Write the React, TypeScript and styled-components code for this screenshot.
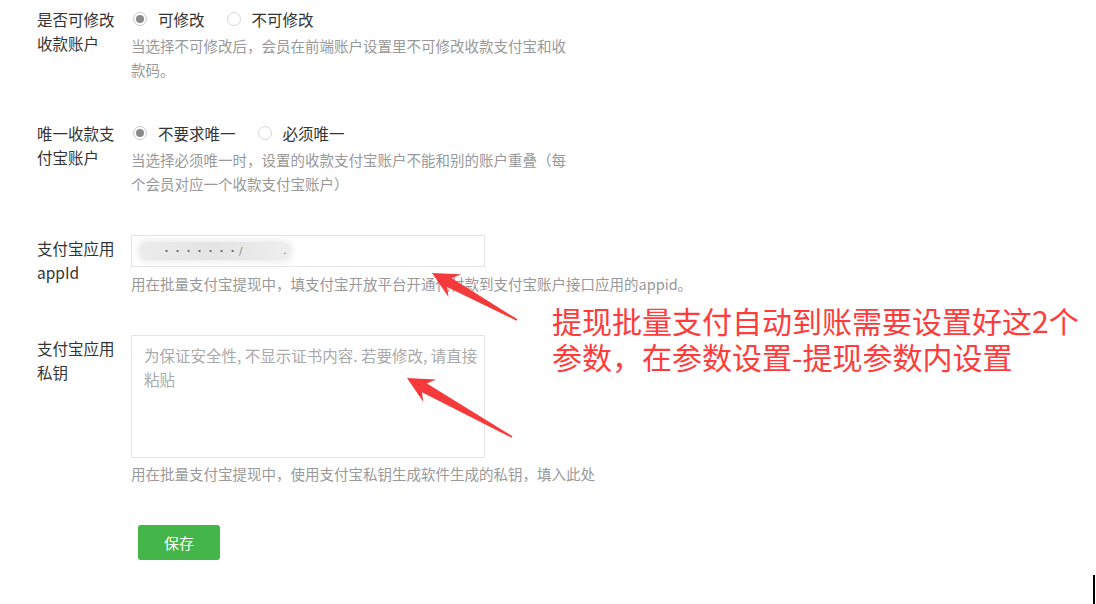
import React from "react";
import styled, { createGlobalStyle } from "styled-components";

const GlobalStyle = createGlobalStyle`
  body {
    margin: 0;
    background: #fff;
    font-family: "Noto Sans CJK SC", "Noto Sans", sans-serif;
  }
`;

type Pt = [number, number];

// red screenshot-style arrow, tip first, tail second
function arrowPoints(tip: Pt, tail: Pt) {
  const [tx, ty] = tip;
  const dx = tail[0] - tx;
  const dy = tail[1] - ty;
  const len = Math.hypot(dx, dy);
  const ux = dx / len;
  const uy = dy / len;
  const nx = -uy;
  const ny = ux;
  const at = (along: number, side: number): string =>
    `${(tx + ux * along + nx * side).toFixed(1)},${(ty + uy * along + ny * side).toFixed(1)}`;
  return [
    at(0, 0),
    at(26, 13),
    at(20, 5),
    at(len, 0.8),
    at(len, -0.8),
    at(20, -5),
    at(26, -13),
  ].join(" ");
}

export default function App() {
  return (
    <>
      <GlobalStyle />
      <Page>
        <Form>
          <Row>
            <Label>是否可修改收款账户</Label>
            <Control>
              <RadioGroup>
                <Option>
                  <Dot $checked />
                  可修改
                </Option>
                <Option>
                  <Dot $checked={false} />
                  不可修改
                </Option>
              </RadioGroup>
              <Help $gap={3} $narrow>
                当选择不可修改后，会员在前端账户设置里不可修改收款支付宝和收款码。
              </Help>
            </Control>
          </Row>

          <Row>
            <Label>唯一收款支付宝账户</Label>
            <Control>
              <RadioGroup>
                <Option>
                  <Dot $checked />
                  不要求唯一
                </Option>
                <Option>
                  <Dot $checked={false} />
                  必须唯一
                </Option>
              </RadioGroup>
              <Help $gap={3} $narrow>
                当选择必须唯一时，设置的收款支付宝账户不能和别的账户重叠（每个会员对应一个收款支付宝账户）
              </Help>
            </Control>
          </Row>

          <Row>
            <Label $offset={1}>支付宝应用appId</Label>
            <Control>
              <Field>
                <Smudge>
                  <Dots>·······/</Dots>
                  <Dots>.</Dots>
                </Smudge>
              </Field>
              <Help $gap={5}>
                用在批量支付宝提现中，填支付宝开放平台开通代付款到支付宝账户接口应用的appid。
              </Help>
            </Control>
          </Row>

          <Row>
            <Label $offset={1}>支付宝应用私钥</Label>
            <Control>
              <KeyArea
                readOnly
                placeholder="为保证安全性, 不显示证书内容. 若要修改, 请直接粘贴"
              />
              <Help $gap={4}>
                用在批量支付宝提现中，使用支付宝私钥生成软件生成的私钥，填入此处
              </Help>
            </Control>
          </Row>

          <ButtonRow>
            <SaveButton>保存</SaveButton>
          </ButtonRow>
        </Form>

        <Arrows viewBox="0 0 1096 604">
          <polygon points={arrowPoints([432, 273], [517, 320])} />
          <polygon points={arrowPoints([407, 378], [512, 437])} />
        </Arrows>

        <Note>
          {"提现批量支付自动到账需要设置好这2个\n参数，在参数设置-提现参数内设置"}
        </Note>

        <Caret />
      </Page>
    </>
  );
}

const Page = styled.div`
  position: relative;
  width: 1096px;
  height: 604px;
  overflow: hidden;
  box-sizing: border-box;
  padding: 7px 0 0 37px;
`;

const Form = styled.div`
  display: flex;
  flex-direction: column;
  gap: 39px;
`;

const Row = styled.div`
  display: flex;
  align-items: flex-start;
`;

const Label = styled.div<{ $offset?: number }>`
  width: 84px;
  margin-right: 10px;
  padding-top: ${p => p.$offset ?? 0}px;
  font-size: 15.5px;
  line-height: 24px;
  color: #333;
`;

const Control = styled.div`
  display: flex;
  flex-direction: column;
`;

const RadioGroup = styled.div`
  display: flex;
  align-items: center;
  gap: 22px;
  height: 24px;
  padding-left: 2px;
`;

const Option = styled.label`
  display: flex;
  align-items: center;
  gap: 11px;
  font-size: 15.5px;
  color: #333;
`;

const Dot = styled.span<{ $checked: boolean }>`
  display: flex;
  align-items: center;
  justify-content: center;
  width: 14px;
  height: 14px;
  box-sizing: border-box;
  border-radius: 50%;
  border: 1px solid ${p => (p.$checked ? "#c8c8c8" : "#d6d6d6")};

  &::after {
    content: "";
    display: ${p => (p.$checked ? "block" : "none")};
    width: 8px;
    height: 8px;
    border-radius: 50%;
    background: #8a8a8a;
  }
`;

const Help = styled.div<{ $gap: number; $narrow?: boolean }>`
  margin-top: ${p => p.$gap}px;
  font-size: 14.5px;
  line-height: 24px;
  color: #999;
  ${p => p.$narrow && "max-width: 445px;"}
`;

const Field = styled.div`
  display: flex;
  align-items: center;
  width: 354px;
  height: 32px;
  box-sizing: border-box;
  padding-left: 8px;
  border: 1px solid #e4e4e4;
`;

const Smudge = styled.span`
  display: flex;
  align-items: center;
  justify-content: space-between;
  width: 150px;
  height: 18px;
  box-sizing: border-box;
  padding: 0 2px 0 22px;
  border-radius: 6px;
  background: linear-gradient(90deg, #ececec, #e4e4e4 50%, #eeeeee);
  box-shadow: 0 0 5px 3px #f0f0f0;
`;

const Dots = styled.span`
  font-size: 9px;
  line-height: 12px;
  letter-spacing: 2px;
  color: #555;
  white-space: nowrap;
`;

const KeyArea = styled.textarea`
  width: 354px;
  height: 123px;
  box-sizing: border-box;
  margin: 0;
  padding: 7px 3px 7px 12px;
  border: 1px solid #e4e4e4;
  border-radius: 0;
  resize: none;
  outline: none;
  font-family: inherit;
  font-size: 15.5px;
  line-height: 24px;
  color: #333;

  &::placeholder {
    color: #aaa;
  }
`;

const ButtonRow = styled.div`
  display: flex;
  padding-left: 101px;
`;

const SaveButton = styled.button`
  width: 82px;
  height: 35px;
  border: none;
  border-radius: 3px;
  background: #44b549;
  color: #fff;
  font-family: inherit;
  font-size: 15px;
  cursor: pointer;
`;

const Arrows = styled.svg`
  position: absolute;
  top: 0;
  left: 0;
  width: 1096px;
  height: 604px;
  pointer-events: none;

  polygon {
    fill: #f43a3a;
  }
`;

const Note = styled.div`
  position: absolute;
  left: 552px;
  top: 302px;
  font-size: 30px;
  line-height: 36px;
  color: #ff3b3b;
  white-space: pre;
`;

const Caret = styled.div`
  position: absolute;
  right: 1px;
  bottom: 0;
  width: 2px;
  height: 29px;
  background: #000;
`;
